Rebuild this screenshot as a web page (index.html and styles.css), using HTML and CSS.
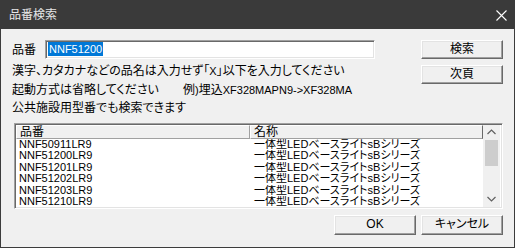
FILE: index.html
```html
<!DOCTYPE html>
<html lang="ja">
<head>
<meta charset="utf-8">
<title>品番検索</title>
<link rel="stylesheet" href="styles.css">
</head>
<body>
<div class="window">
  <div class="titlebar">
    <span class="title">品番検索</span>
    <svg class="close" width="11" height="11" viewBox="0 0 11 11"><path d="M0.5 0.5 L10.5 10.5 M10.5 0.5 L0.5 10.5" stroke="#ffffff" stroke-width="1.1" fill="none"/></svg>
  </div>
  <div class="content">
    <div class="top">
      <div class="left">
        <div class="field">
          <span class="field-label">品番</span>
          <div class="input"><span class="sel">NNF51200</span></div>
        </div>
        <p class="line">漢字、カタカナなどの品名は入力せず「<span class="lat">X</span>」以下を入力してください</p>
        <p class="line"><span class="note-a">起動方式は省略してください</span><span>例<span class="lat">)</span>埋込<span class="lat">XF328MAPN9-&gt;XF328MA</span></span></p>
        <p class="line">公共施設用型番でも検索できます</p>
      </div>
      <div class="side-buttons">
        <button class="btn">検索</button>
        <button class="btn">次頁</button>
      </div>
    </div>
    <div class="list">
      <div class="table">
        <div class="head">
          <div class="hcell c1">品番</div>
          <div class="hcell c2">名称</div>
        </div>
        <div class="row"><span class="cell c1">NNF50911LR9</span><span class="cell c2">一体型LEDベースライトsBシリーズ</span></div>
        <div class="row"><span class="cell c1">NNF51200LR9</span><span class="cell c2">一体型LEDベースライトsBシリーズ</span></div>
        <div class="row"><span class="cell c1">NNF51201LR9</span><span class="cell c2">一体型LEDベースライトsBシリーズ</span></div>
        <div class="row"><span class="cell c1">NNF51202LR9</span><span class="cell c2">一体型LEDベースライトsBシリーズ</span></div>
        <div class="row"><span class="cell c1">NNF51203LR9</span><span class="cell c2">一体型LEDベースライトsBシリーズ</span></div>
        <div class="row"><span class="cell c1">NNF51210LR9</span><span class="cell c2">一体型LEDベースライトsBシリーズ</span></div>
      </div>
      <div class="scrollbar">
        <div class="arrow"><svg width="9" height="6" viewBox="0 0 9 6"><path d="M0.5 5 L4.5 1 L8.5 5" stroke="#606060" stroke-width="1.2" fill="none"/></svg></div>
        <div class="thumb"></div>
        <div class="track"></div>
        <div class="arrow"><svg width="9" height="6" viewBox="0 0 9 6"><path d="M0.5 1 L4.5 5 L8.5 1" stroke="#606060" stroke-width="1.2" fill="none"/></svg></div>
      </div>
    </div>
    <div class="footer">
      <button class="btn">OK</button>
      <button class="btn">キャンセル</button>
    </div>
  </div>
</div>
</body>
</html>
```

FILE: styles.css
```css
html, body {
  margin: 0;
  padding: 0;
  background: #f0f0f0;
}

.window {
  width: 515px;
  height: 248px;
  box-sizing: border-box;
  background: #f0f0f0;
  border: 1px solid #3c3c3c;
  border-top: none;
  display: flex;
  flex-direction: column;
  font-family: "Liberation Sans", "Noto Sans CJK JP", sans-serif;
  font-size: 12px;
  font-feature-settings: "palt";
  color: #000;
}

.titlebar {
  height: 29px;
  flex: none;
  background: #3a3a3a;
  display: flex;
  align-items: center;
  justify-content: space-between;
  padding: 0 8px 0 9px;
  margin: 0 -1px;
}

.title {
  color: #e6e6e6;
  font-size: 12px;
  line-height: 14px;
}

.close {
  display: block;
  margin-top: 1px;
}

.content {
  flex: 1;
  display: flex;
  flex-direction: column;
  padding: 11px 11px 0 11px;
}

.top {
  display: flex;
  justify-content: space-between;
  align-items: flex-start;
}

.left {
  display: flex;
  flex-direction: column;
}

.field {
  display: flex;
  align-items: center;
  height: 19px;
}

.field-label {
  width: 33px;
  line-height: 14px;
}

.input {
  width: 330px;
  height: 19px;
  box-sizing: border-box;
  background: #ffffff;
  border-top: 1px solid #a0a0a0;
  border-left: 1px solid #a0a0a0;
  border-right: 1px solid #ffffff;
  border-bottom: 1px solid #ffffff;
  box-shadow: inset 1px 1px 0 #696969, inset -1px -1px 0 #e3e3e3;
  padding: 1px 0 0 2px;
  display: flex;
  align-items: flex-start;
}

.sel {
  background: #0078d7;
  color: #ffffff;
  font-size: 11px;
  line-height: 14px;
  padding: 0 1px;
}

.line {
  margin: 0;
  line-height: 18.5px;
  white-space: nowrap;
}

.line:first-of-type {
  margin-top: 3px;
}

.lat {
  font-size: 11px;
}

.note-a {
  display: inline-block;
  width: 171px;
}

.side-buttons {
  display: flex;
  flex-direction: column;
  gap: 6px;
}

.btn {
  width: 82px;
  height: 19px;
  box-sizing: border-box;
  background: #f0f0f0;
  border-top: 1px solid #ffffff;
  border-left: 1px solid #ffffff;
  border-right: 1px solid #696969;
  border-bottom: 1px solid #696969;
  box-shadow: inset -1px -1px 0 #a0a0a0, inset 1px 1px 0 #e3e3e3;
  padding: 0;
  margin: 0;
  font-family: inherit;
  font-size: 12px;
  font-feature-settings: "palt";
  color: #000;
  line-height: 15px;
}

.list {
  margin-top: 5px;
  margin-left: 2px;
  width: 489px;
  height: 86px;
  box-sizing: border-box;
  background: #ffffff;
  border-top: 1px solid #a0a0a0;
  border-left: 1px solid #a0a0a0;
  border-right: 1px solid #ffffff;
  border-bottom: 1px solid #ffffff;
  box-shadow: inset 1px 1px 0 #696969, inset -1px -1px 0 #e3e3e3;
  padding: 1px;
  display: flex;
  overflow: hidden;
}

.table {
  width: 467px;
  overflow: hidden;
}

.head {
  display: flex;
  height: 14px;
  background: #f0f0f0;
}

.hcell {
  box-sizing: border-box;
  height: 14px;
  line-height: 13px;
  border-top: 1px solid #ffffff;
  border-left: 1px solid #ffffff;
  border-right: 1px solid #a0a0a0;
  border-bottom: 1px solid #a0a0a0;
  font-size: 12px;
  white-space: nowrap;
}

.hcell.c1 {
  width: 234px;
  padding-left: 3px;
}

.hcell.c2 {
  width: 233px;
  padding-left: 3px;
  border-right-color: #696969;
}

.row {
  display: flex;
  height: 11.5px;
  line-height: 11.5px;
  font-size: 11px;
  white-space: nowrap;
}

.cell {
  display: block;
  overflow: hidden;
}

.cell.c1 {
  width: 234px;
  padding-left: 3px;
  box-sizing: border-box;
}

.cell.c2 {
  width: 233px;
  padding-left: 4px;
  box-sizing: border-box;
}

.scrollbar {
  width: 17px;
  flex: none;
  background: #f0f0f0;
  display: flex;
  flex-direction: column;
  align-items: center;
}

.arrow {
  height: 15px;
  width: 17px;
  display: flex;
  align-items: center;
  justify-content: center;
}

.thumb {
  width: 13px;
  height: 26px;
  background: #cdcdcd;
}

.track {
  flex: 1;
}

.footer {
  margin-top: 6px;
  display: flex;
  justify-content: flex-end;
  gap: 5px;
}

.footer .btn {
  height: 20px;
}
```
